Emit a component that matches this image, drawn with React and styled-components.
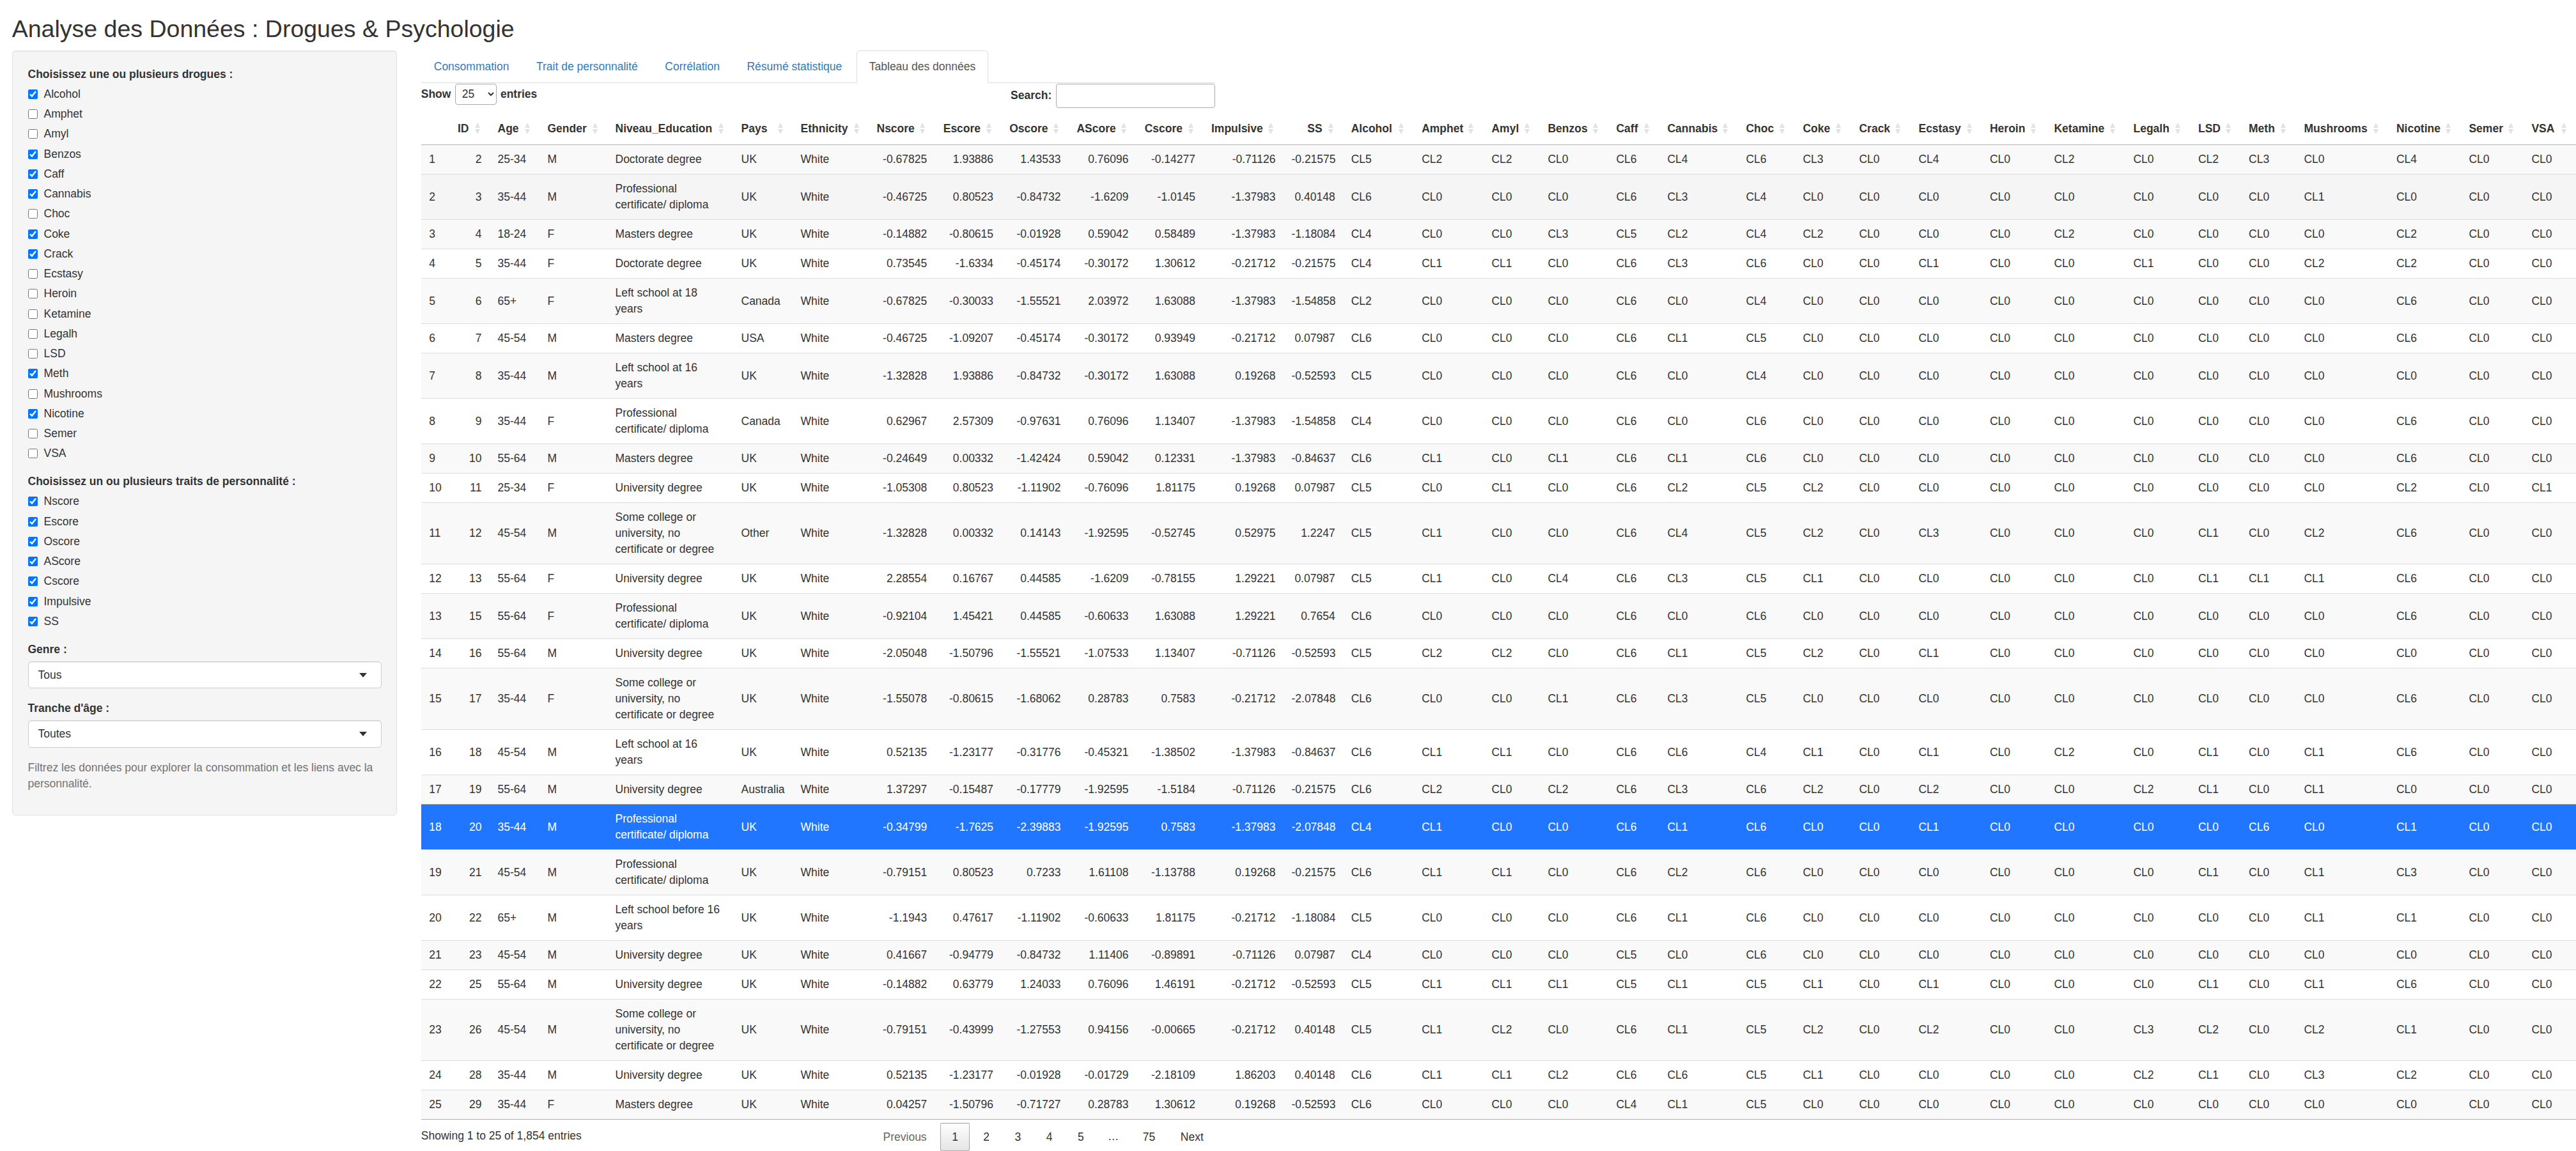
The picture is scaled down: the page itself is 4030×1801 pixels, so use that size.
import React from 'react';
import styled, { createGlobalStyle } from 'styled-components';

const GlobalStyle = createGlobalStyle`
  html, body {
    margin: 0;
    background: #fff;
  }
  body {
    font-family: "Liberation Sans", Arial, sans-serif;
    font-size: 17.5px;
    line-height: 25px;
    color: #333;
  }
  * { box-sizing: border-box; }
`;

const Page = styled.div`
  width: 1920px;
  padding: 0 18.75px;
`;

const Title = styled.h2`
  margin: 25px 0 12.5px;
  font-size: 37.5px;
  font-weight: 500;
  line-height: 41.25px;
`;

const Columns = styled.div`
  display: flex;
  margin: 0 -18.75px;
`;

const SideColumn = styled.div`
  flex: 0 0 640px;
  padding: 0 18.75px;
`;

const MainColumn = styled.div`
  flex: 0 0 1280px;
  min-width: 0;
  padding: 0 18.75px;
`;

/* sidebar */
const Well = styled.form`
  padding: 23.75px;
  background: #f5f5f5;
  border: 1px solid #e3e3e3;
  border-radius: 5px;
  box-shadow: inset 0 1px 1px rgba(0, 0, 0, 0.05);
`;

const FormGroup = styled.div`
  margin-bottom: 18.75px;
`;

const ControlLabel = styled.div`
  margin-bottom: 6.25px;
  font-weight: 700;
`;

const CheckList = styled.div`
  display: flex;
  flex-direction: column;
  gap: 6.25px;
`;

const CheckLabel = styled.label`
  display: flex;
  align-items: center;
  height: 25px;
  padding-left: 25px;
  position: relative;
`;

const CheckInput = styled.input`
  position: absolute;
  left: 0;
  top: 5px;
  width: 15px;
  height: 15px;
  margin: 0;
`;

const SelectBox = styled.div`
  display: flex;
  align-items: center;
  justify-content: space-between;
  height: 42.5px;
  padding: 0 22px 0 15px;
  background: #fff;
  border: 1px solid #ccc;
  border-radius: 5px;
  box-shadow: inset 0 1px 1px rgba(0, 0, 0, 0.075);
`;

const Caret = styled.span`
  width: 0;
  height: 0;
  border-style: solid;
  border-width: 7px 6px 0 6px;
  border-color: #333 transparent transparent transparent;
`;

const HelpText = styled.p`
  margin: 0 0 12.5px;
  color: #737373;
`;

/* tabs */
const TabBar = styled.ul`
  display: flex;
  gap: 2.5px;
  height: 51px;
  margin: 0;
  padding: 0;
  list-style: none;
  border-bottom: 1px solid #ddd;
`;

const Tab = styled.li`
  height: 51px;
  padding: 12.5px 19px;
  border: 1px solid ${(p) => (p.$active ? '#ddd' : 'transparent')};
  border-bottom-color: ${(p) => (p.$active ? '#fff' : 'transparent')};
  border-radius: 5px 5px 0 0;
  background: ${(p) => (p.$active ? '#fff' : 'transparent')};
  color: ${(p) => (p.$active ? '#555' : '#337ab7')};
`;

/* datatable controls */
const TableControls = styled.div`
  display: flex;
  justify-content: space-between;
  align-items: flex-start;
  padding-top: 1px;
  font-weight: 700;
`;

const LengthLabel = styled.label`
  display: flex;
  align-items: center;
  gap: 6.25px;
`;

const LengthSelect = styled.select`
  width: 65px;
  height: 33px;
  padding: 0 6px;
  background: #fff;
  border: 1px solid #aaa;
  border-radius: 4px;
  color: #333;
  font: 400 17.5px "Liberation Sans", Arial, sans-serif;
`;

const SearchLabel = styled.label`
  display: flex;
  align-items: center;
  gap: 7px;
`;

const SearchInput = styled.input`
  width: 249px;
  height: 38px;
  padding: 0 6px;
  background: transparent;
  border: 1px solid #aaa;
  border-radius: 4px;
`;

/* table */
const Table = styled.table`
  table-layout: fixed;
  width: ${(p) => p.$width}px;
  margin-top: 7.25px;
  border-collapse: separate;
  border-spacing: 0;
  border-bottom: 1px solid rgba(0, 0, 0, 0.3);
`;

const Col = styled.col`
  width: ${(p) => p.$width}px;
`;

const HeadCell = styled.th`
  position: relative;
  padding: 12.5px ${(p) => (p.$numeric ? '32.5px' : '12.5px')} 12.5px 12.5px;
  text-align: ${(p) => (p.$numeric ? 'right' : 'left')};
  font-weight: 700;
  white-space: nowrap;
  border-bottom: 1px solid rgba(0, 0, 0, 0.3);
`;

const SortUp = styled.span`
  position: absolute;
  right: 15.5px;
  top: 16px;
  width: 0;
  height: 0;
  border-style: solid;
  border-width: 0 4.5px 8px 4.5px;
  border-color: transparent transparent #e2e2e2 transparent;
`;

const SortDown = styled(SortUp)`
  top: 26px;
  border-width: 8px 4.5px 0 4.5px;
  border-color: #e2e2e2 transparent transparent transparent;
`;

const rowBackground = (p) => {
  if (p.$selected) return '#2176ff';
  if (p.$hovered) return '#f5f5f5';
  return p.$striped ? '#f9f9f9' : '#fff';
};

const Row = styled.tr`
  background: ${rowBackground};
  color: ${(p) => (p.$selected ? '#fff' : '#333')};
`;

const Cell = styled.td`
  padding: 10px 12.5px;
  vertical-align: middle;
  text-align: ${(p) => (p.$numeric ? 'right' : 'left')};
  border-top: ${(p) => (p.$first ? 'none' : '1px solid #ddd')};
  ${(p) => p.$selected && 'border-top-color: #a6a6a6;'}
`;

/* footer */
const TableFooter = styled.div`
  display: flex;
  justify-content: space-between;
  align-items: center;
  margin-top: 5px;
`;

const InfoText = styled.div`
  padding-bottom: 4px;
`;

const Pagination = styled.div`
  display: flex;
  gap: 2.5px;
`;

const PageButton = styled.span`
  height: 44px;
  padding: 8.5px 17.5px;
  border: 1px solid ${(p) => (p.$current ? 'rgba(0, 0, 0, 0.3)' : 'transparent')};
  border-radius: 2.5px;
  color: ${(p) => (p.$disabled ? '#666' : '#333')};
  ${(p) => p.$current && 'background: linear-gradient(to bottom, rgba(230, 230, 230, 0.05) 0%, rgba(0, 0, 0, 0.1) 100%);'}
`;

const Ellipsis = styled.span`
  padding: 8.5px 16.25px;
`;

const drugs = ['Alcohol', 'Amphet', 'Amyl', 'Benzos', 'Caff', 'Cannabis', 'Choc', 'Coke', 'Crack', 'Ecstasy', 'Heroin', 'Ketamine', 'Legalh', 'LSD', 'Meth', 'Mushrooms', 'Nicotine', 'Semer', 'VSA'];
const uncheckedDrugs = ['Amphet', 'Amyl', 'Choc', 'Ecstasy', 'Heroin', 'Ketamine', 'Legalh', 'LSD', 'Mushrooms', 'Semer', 'VSA'];
const traits = ['Nscore', 'Escore', 'Oscore', 'AScore', 'Cscore', 'Impulsive', 'SS'];
const tabs = ['Consommation', 'Trait de personnalité', 'Corrélation', 'Résumé statistique', 'Tableau des données'];

const columnEdges = [658.75, 703.5, 766, 844, 950, 1147, 1240, 1359, 1462.7, 1566.6, 1672, 1778, 1882.5, 2008, 2101.2, 2211.7, 2321, 2409, 2516, 2596, 2719, 2808, 2896, 2989, 3100.5, 3201, 3325, 3426.5, 3505.6, 3592, 3736.5, 3850, 3948, 4030];
const columnWidths = columnEdges.slice(1).map((edge, i) => edge - columnEdges[i]);

const headers = ['', 'ID', 'Age', 'Gender', 'Niveau_Education', 'Pays', 'Ethnicity', ...traits, ...drugs];
const numericColumns = new Set(['ID', ...traits]);

const DOC = 'Doctorate degree';
const PRO = 'Professional certificate/ diploma';
const MAS = 'Masters degree';
const UNI = 'University degree';
const SOME = 'Some college or university, no certificate or degree';

const rows = [
  [2, '25-34', 'M', DOC, 'UK', '-0.67825 1.93886 1.43533 0.76096 -0.14277 -0.71126 -0.21575', '5 2 2 0 6 4 6 3 0 4 0 2 0 2 3 0 4 0 0'],
  [3, '35-44', 'M', PRO, 'UK', '-0.46725 0.80523 -0.84732 -1.6209 -1.0145 -1.37983 0.40148', '6 0 0 0 6 3 4 0 0 0 0 0 0 0 0 1 0 0 0'],
  [4, '18-24', 'F', MAS, 'UK', '-0.14882 -0.80615 -0.01928 0.59042 0.58489 -1.37983 -1.18084', '4 0 0 3 5 2 4 2 0 0 0 2 0 0 0 0 2 0 0'],
  [5, '35-44', 'F', DOC, 'UK', '0.73545 -1.6334 -0.45174 -0.30172 1.30612 -0.21712 -0.21575', '4 1 1 0 6 3 6 0 0 1 0 0 1 0 0 2 2 0 0'],
  [6, '65+', 'F', 'Left school at 18 years', 'Canada', '-0.67825 -0.30033 -1.55521 2.03972 1.63088 -1.37983 -1.54858', '2 0 0 0 6 0 4 0 0 0 0 0 0 0 0 0 6 0 0'],
  [7, '45-54', 'M', MAS, 'USA', '-0.46725 -1.09207 -0.45174 -0.30172 0.93949 -0.21712 0.07987', '6 0 0 0 6 1 5 0 0 0 0 0 0 0 0 0 6 0 0'],
  [8, '35-44', 'M', 'Left school at 16 years', 'UK', '-1.32828 1.93886 -0.84732 -0.30172 1.63088 0.19268 -0.52593', '5 0 0 0 6 0 4 0 0 0 0 0 0 0 0 0 0 0 0'],
  [9, '35-44', 'F', PRO, 'Canada', '0.62967 2.57309 -0.97631 0.76096 1.13407 -1.37983 -1.54858', '4 0 0 0 6 0 6 0 0 0 0 0 0 0 0 0 6 0 0'],
  [10, '55-64', 'M', MAS, 'UK', '-0.24649 0.00332 -1.42424 0.59042 0.12331 -1.37983 -0.84637', '6 1 0 1 6 1 6 0 0 0 0 0 0 0 0 0 6 0 0'],
  [11, '25-34', 'F', UNI, 'UK', '-1.05308 0.80523 -1.11902 -0.76096 1.81175 0.19268 0.07987', '5 0 1 0 6 2 5 2 0 0 0 0 0 0 0 0 2 0 1'],
  [12, '45-54', 'M', SOME, 'Other', '-1.32828 0.00332 0.14143 -1.92595 -0.52745 0.52975 1.2247', '5 1 0 0 6 4 5 2 0 3 0 0 0 1 0 2 6 0 0'],
  [13, '55-64', 'F', UNI, 'UK', '2.28554 0.16767 0.44585 -1.6209 -0.78155 1.29221 0.07987', '5 1 0 4 6 3 5 1 0 0 0 0 0 1 1 1 6 0 0'],
  [15, '55-64', 'F', PRO, 'UK', '-0.92104 1.45421 0.44585 -0.60633 1.63088 1.29221 0.7654', '6 0 0 0 6 0 6 0 0 0 0 0 0 0 0 0 6 0 0'],
  [16, '55-64', 'M', UNI, 'UK', '-2.05048 -1.50796 -1.55521 -1.07533 1.13407 -0.71126 -0.52593', '5 2 2 0 6 1 5 2 0 1 0 0 0 0 0 0 0 0 0'],
  [17, '35-44', 'F', SOME, 'UK', '-1.55078 -0.80615 -1.68062 0.28783 0.7583 -0.21712 -2.07848', '6 0 0 1 6 3 5 0 0 0 0 0 0 0 0 0 6 0 0'],
  [18, '45-54', 'M', 'Left school at 16 years', 'UK', '0.52135 -1.23177 -0.31776 -0.45321 -1.38502 -1.37983 -0.84637', '6 1 1 0 6 6 4 1 0 1 0 2 0 1 0 1 6 0 0'],
  [19, '55-64', 'M', UNI, 'Australia', '1.37297 -0.15487 -0.17779 -1.92595 -1.5184 -0.71126 -0.21575', '6 2 0 2 6 3 6 2 0 2 0 0 2 1 0 1 0 0 0'],
  [20, '35-44', 'M', PRO, 'UK', '-0.34799 -1.7625 -2.39883 -1.92595 0.7583 -1.37983 -2.07848', '4 1 0 0 6 1 6 0 0 1 0 0 0 0 6 0 1 0 0'],
  [21, '45-54', 'M', PRO, 'UK', '-0.79151 0.80523 0.7233 1.61108 -1.13788 0.19268 -0.21575', '6 1 1 0 6 2 6 0 0 0 0 0 0 1 0 1 3 0 0'],
  [22, '65+', 'M', 'Left school before 16 years', 'UK', '-1.1943 0.47617 -1.11902 -0.60633 1.81175 -0.21712 -1.18084', '5 0 0 0 6 1 6 0 0 0 0 0 0 0 0 1 1 0 0'],
  [23, '45-54', 'M', UNI, 'UK', '0.41667 -0.94779 -0.84732 1.11406 -0.89891 -0.71126 0.07987', '4 0 0 0 5 0 6 0 0 0 0 0 0 0 0 0 0 0 0'],
  [25, '55-64', 'M', UNI, 'UK', '-0.14882 0.63779 1.24033 0.76096 1.46191 -0.21712 -0.52593', '5 1 1 1 5 1 5 1 0 1 0 0 0 1 0 1 6 0 0'],
  [26, '45-54', 'M', SOME, 'UK', '-0.79151 -0.43999 -1.27553 0.94156 -0.00665 -0.21712 0.40148', '5 1 2 0 6 1 5 2 0 2 0 0 3 2 0 2 1 0 0'],
  [28, '35-44', 'M', UNI, 'UK', '0.52135 -1.23177 -0.01928 -0.01729 -2.18109 1.86203 0.40148', '6 1 1 2 6 6 5 1 0 0 0 0 2 1 0 3 2 0 0'],
  [29, '35-44', 'F', MAS, 'UK', '0.04257 -1.50796 -0.71727 0.28783 1.30612 0.19268 -0.52593', '6 0 0 0 4 1 5 0 0 0 0 0 0 0 0 0 0 0 0'],
];

const SELECTED_ROW = 17;
const HOVERED_ROW = 1;

const CheckItem = ({ name, checked }) => (
  <CheckLabel>
    <CheckInput type="checkbox" defaultChecked={checked} />
    {name}
  </CheckLabel>
);

const DataRow = ({ row, index }) => {
  const [id, age, gender, education, country, scores, levels] = row;
  const selected = index === SELECTED_ROW;
  const cellProps = { $first: index === 0, $selected: selected };
  return (
    <Row $striped={index % 2 === 0} $hovered={index === HOVERED_ROW} $selected={selected}>
      <Cell {...cellProps}>{index + 1}</Cell>
      <Cell {...cellProps} $numeric>{id}</Cell>
      <Cell {...cellProps}>{age}</Cell>
      <Cell {...cellProps}>{gender}</Cell>
      <Cell {...cellProps}>{education}</Cell>
      <Cell {...cellProps}>{country}</Cell>
      <Cell {...cellProps}>White</Cell>
      {scores.split(' ').map((score, i) => (
        <Cell key={traits[i]} {...cellProps} $numeric>{score}</Cell>
      ))}
      {levels.split(' ').map((level, i) => (
        <Cell key={drugs[i]} {...cellProps}>CL{level}</Cell>
      ))}
    </Row>
  );
};

const App = () => {
  const tableWidth = columnEdges[columnEdges.length - 1] - columnEdges[0];

  return (
    <Page>
      <GlobalStyle />
      <Title>Analyse des Données : Drogues &amp; Psychologie</Title>
      <Columns>
        <SideColumn>
          <Well>
            <FormGroup>
              <ControlLabel>Choisissez une ou plusieurs drogues :</ControlLabel>
              <CheckList>
                {drugs.map((d) => (
                  <CheckItem key={d} name={d} checked={!uncheckedDrugs.includes(d)} />
                ))}
              </CheckList>
            </FormGroup>
            <FormGroup>
              <ControlLabel>Choisissez un ou plusieurs traits de personnalité :</ControlLabel>
              <CheckList>
                {traits.map((t) => (
                  <CheckItem key={t} name={t} checked />
                ))}
              </CheckList>
            </FormGroup>
            <FormGroup>
              <ControlLabel>Genre :</ControlLabel>
              <SelectBox>Tous<Caret /></SelectBox>
            </FormGroup>
            <FormGroup>
              <ControlLabel>Tranche d'âge :</ControlLabel>
              <SelectBox>Toutes<Caret /></SelectBox>
            </FormGroup>
            <HelpText>Filtrez les données pour explorer la consommation et les liens avec la personnalité.</HelpText>
          </Well>
        </SideColumn>
        <MainColumn>
          <TabBar>
            {tabs.map((t, i) => (
              <Tab key={t} $active={i === tabs.length - 1}>{t}</Tab>
            ))}
          </TabBar>
          <TableControls>
            <LengthLabel>
              Show
              <LengthSelect defaultValue="25">
                <option>10</option>
                <option>25</option>
                <option>50</option>
                <option>100</option>
              </LengthSelect>
              entries
            </LengthLabel>
            <SearchLabel>
              Search:
              <SearchInput type="search" />
            </SearchLabel>
          </TableControls>
          <Table $width={tableWidth}>
            <colgroup>
              {columnWidths.map((w, i) => (
                <Col key={i} $width={w} />
              ))}
            </colgroup>
            <thead>
              <tr>
                {headers.map((h, i) => (
                  <HeadCell key={i} $numeric={numericColumns.has(h)}>
                    {h}
                    {h && <SortUp />}
                    {h && <SortDown />}
                  </HeadCell>
                ))}
              </tr>
            </thead>
            <tbody>
              {rows.map((row, i) => (
                <DataRow key={row[0]} row={row} index={i} />
              ))}
            </tbody>
          </Table>
          <TableFooter>
            <InfoText>Showing 1 to 25 of 1,854 entries</InfoText>
            <Pagination>
              <PageButton $disabled>Previous</PageButton>
              <PageButton $current>1</PageButton>
              <PageButton>2</PageButton>
              <PageButton>3</PageButton>
              <PageButton>4</PageButton>
              <PageButton>5</PageButton>
              <Ellipsis>…</Ellipsis>
              <PageButton>75</PageButton>
              <PageButton>Next</PageButton>
            </Pagination>
          </TableFooter>
        </MainColumn>
      </Columns>
    </Page>
  );
};

export default App;
